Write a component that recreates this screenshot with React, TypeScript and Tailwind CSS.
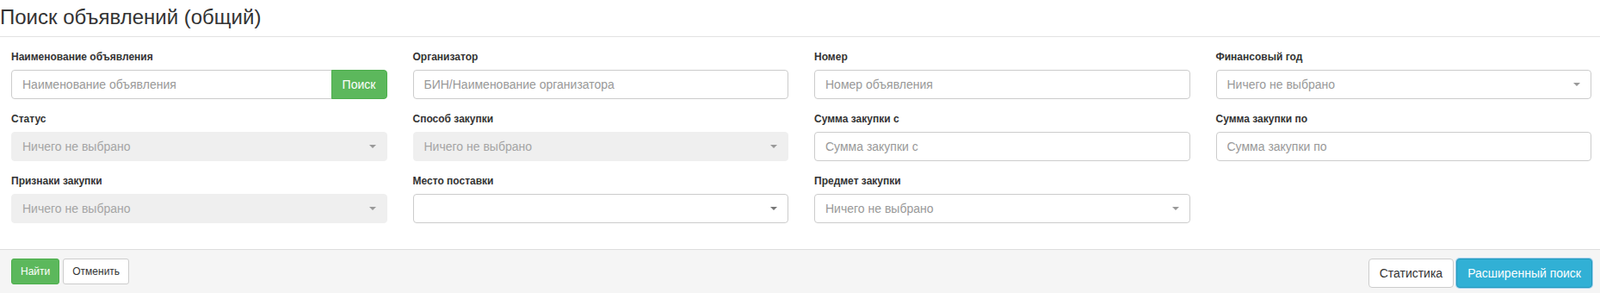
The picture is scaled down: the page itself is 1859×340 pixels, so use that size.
import React from "react";

type Field =
  | { kind: "search"; label: string; placeholder: string }
  | { kind: "input"; label: string; placeholder: string }
  | { kind: "select"; label: string; value: string; disabled?: boolean };

const fields: Field[] = [
  { kind: "search", label: "Наименование объявления", placeholder: "Наименование объявления" },
  { kind: "input", label: "Организатор", placeholder: "БИН/Наименование организатора" },
  { kind: "input", label: "Номер", placeholder: "Номер объявления" },
  { kind: "select", label: "Финансовый год", value: "Ничего не выбрано" },
  { kind: "select", label: "Статус", value: "Ничего не выбрано", disabled: true },
  { kind: "select", label: "Способ закупки", value: "Ничего не выбрано", disabled: true },
  { kind: "input", label: "Сумма закупки с", placeholder: "Сумма закупки с" },
  { kind: "input", label: "Сумма закупки по", placeholder: "Сумма закупки по" },
  { kind: "select", label: "Признаки закупки", value: "Ничего не выбрано", disabled: true },
  { kind: "select", label: "Место поставки", value: "" },
  { kind: "select", label: "Предмет закупки", value: "Ничего не выбрано" },
];

function Caret({ dark }: { dark?: boolean }) {
  return (
    <span
      className={
        dark
          ? "h-0 w-0 border-x-[4px] border-t-[4px] border-x-transparent border-t-[#777]"
          : "h-0 w-0 border-x-[4px] border-t-[4px] border-x-transparent border-t-[#999]"
      }
    />
  );
}

function Control({ field }: { field: Field }) {
  if (field.kind === "search") {
    return (
      <div className="flex h-[34px]">
        <input
          className="h-full min-w-0 flex-1 rounded-l-[4px] border border-[#ccc] px-[12px] text-[14px] text-[#555] outline-none placeholder:text-[#999]"
          placeholder={field.placeholder}
        />
        <button className="-ml-px h-full w-[65px] rounded-r-[4px] border border-[#4cae4c] bg-[#5cb85c] text-[14px] text-white">
          Поиск
        </button>
      </div>
    );
  }

  if (field.kind === "input") {
    return (
      <input
        className="block h-[34px] w-full rounded-[4px] border border-[#ccc] px-[12px] text-[14px] text-[#555] outline-none placeholder:text-[#999]"
        placeholder={field.placeholder}
      />
    );
  }

  if (field.disabled) {
    return (
      <div className="flex h-[34px] items-center justify-between rounded-[4px] border border-[#efefef] bg-[#efefef] pl-[12px] pr-[12px] text-[14px] text-[#a5a5a5]">
        <span>{field.value}</span>
        <Caret />
      </div>
    );
  }

  return (
    <div className="flex h-[34px] items-center justify-between rounded-[4px] border border-[#ccc] bg-white pl-[12px] pr-[12px] text-[14px] text-[#999]">
      <span>{field.value}</span>
      <Caret dark={field.value === ""} />
    </div>
  );
}

export default function App() {
  return (
    <main className="min-h-screen bg-white font-['Liberation_Sans',Arial,sans-serif] text-[#333]">
      <div className="border-b border-[#e3e3e3] pb-[9px] pt-[7px]">
        <h3 className="m-0 text-[24px] font-normal leading-[26px]">
          Поиск объявлений (общий)
        </h3>
      </div>

      <div className="grid grid-cols-4 gap-x-[30px] gap-y-[15px] pb-[30px] pl-[13px] pr-[10px] pt-[15px]">
        {fields.map((field) => (
          <div key={field.label}>
            <label className="mb-[6px] block text-[12px] font-bold leading-[17px]">
              {field.label}
            </label>
            <Control field={field} />
          </div>
        ))}
      </div>

      <div className="flex items-start justify-between border-t border-[#ddd] bg-[#f5f5f5] pb-[10px] pl-[13px] pr-[9px] pt-[10px]">
        <div className="flex gap-[4px]">
          <button className="h-[30px] rounded-[3px] border border-[#4cae4c] bg-[#5cb85c] px-[10px] text-[12px] text-white">
            Найти
          </button>
          <button className="h-[30px] rounded-[3px] border border-[#ccc] bg-white px-[10px] text-[12px] text-[#333]">
            Отменить
          </button>
        </div>

        <div className="flex gap-[3px]">
          <button className="h-[34px] rounded-[4px] border border-[#ccc] bg-white px-[12px] text-[14px] text-[#333]">
            Статистика
          </button>
          <button className="h-[34px] rounded-[4px] border border-[#269abc] bg-[#31b0d5] px-[12px] text-[14px] text-white shadow-[0_0_0_1px_#9fd0ef]">
            Расширенный поиск
          </button>
        </div>
      </div>
    </main>
  );
}
